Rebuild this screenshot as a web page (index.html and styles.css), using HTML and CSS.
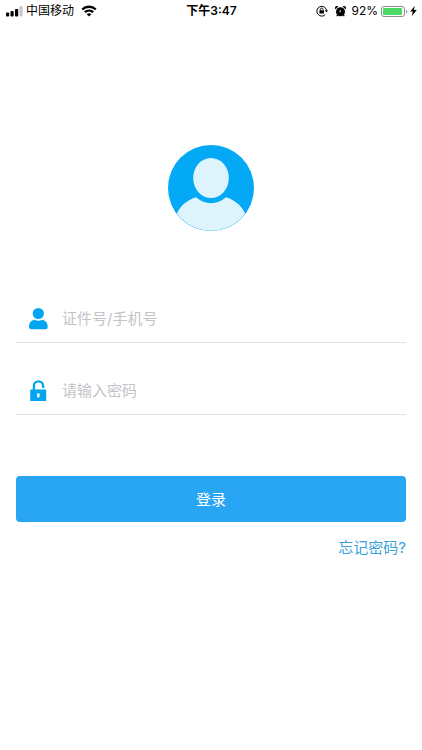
FILE: index.html
```html
<!DOCTYPE html>
<html lang="zh-CN">

<head>
    <meta charset="utf-8">
    <title>登录</title>
    <meta name="viewport" content="width=device-width, initial-scale=1.0">
    <link rel="stylesheet" href="styles.css">
</head>

<body>
    <header class="status-bar">
        <div class="status-left">
            <svg class="signal" width="17" height="11" viewBox="0 0 17 11" aria-hidden="true">
                <rect x="0" y="6.500" width="3.200" height="4" rx="1" />
                <rect x="4.500" y="5" width="3.200" height="5.500" rx="1" />
                <rect x="9" y="3" width="3.200" height="7.500" rx="1" />
                <rect x="13.500" y="0" width="3" height="10.500" rx="1" fill="#c4c4c4" />
            </svg>
            <span class="carrier">中国移动</span>
            <svg class="wifi" width="16" height="12" viewBox="0 0 16 12" fill="none" stroke="#000" stroke-width="2.3" aria-hidden="true">
                <path d="M1.200 4.500C5 .8 11 .8 14.800 4.500" />
                <path d="M3.800 7.200c2.400-2.200 6-2.200 8.400 0" />
                <path d="M8 11.500 5.700 9.200c1.300-1.200 3.300-1.200 4.600 0z" fill="#000" stroke="none" />
            </svg>
        </div>
        <time class="clock">下午3:47</time>
        <div class="status-right">
            <svg class="rotation" width="12" height="12" viewBox="0 0 12 12" fill="none" stroke="#000" aria-hidden="true">
                <path d="M9.200 9.700A4.900 4.900 0 1 1 10.500 5" />
                <path d="M8.800 5.200h3.200L10.500 7.400z" fill="#000" stroke="none" />
                <rect x="3.400" y="5.200" width="4.600" height="3.400" rx=".5" fill="#000" stroke="none" />
                <path d="M4.400 5.400V4.300a1.300 1.300 0 0 1 2.600 0v1.100" stroke-width=".9" />
            </svg>
            <svg class="alarm" width="11" height="11" viewBox="0 0 11 11" aria-hidden="true">
                <circle cx="5.500" cy="5.800" r="4.500" />
                <path d="M.5 3.200A1.900 1.900 0 0 1 3.300.6zM10.500 3.200A1.900 1.900 0 0 0 7.700.6z" />
                <path d="m2.600 8.700-.8 1.500M8.400 8.700l.8 1.500" stroke="#000" stroke-width="1.200" />
                <path d="M5.500 3.800v2.200L4 5.100" fill="none" stroke="#fff" stroke-width=".6" />
            </svg>
            <span class="percent">92%</span>
            <svg class="battery" width="27" height="11" viewBox="0 0 27 11" aria-hidden="true">
                <rect x=".5" y=".5" width="23" height="10" rx="2.500" fill="#fff" stroke="#8d8d8d" />
                <rect x="2" y="2" width="19" height="7" rx="1" fill="#4cd964" />
                <path d="M25 3.700c1.700.4 1.700 3.200 0 3.600z" fill="#8d8d8d" />
            </svg>
            <svg class="bolt" width="7" height="10" viewBox="0 0 7 10" aria-hidden="true">
                <path d="M4.700 0 .2 5.600h2.600L1.900 10l4.900-5.900H4z" />
            </svg>
        </div>
    </header>

    <main class="login">
        <svg class="avatar" width="86" height="86" viewBox="0 0 86 86" role="img" aria-label="头像">
            <defs>
                <clipPath id="avatar-clip">
                    <circle cx="43" cy="43" r="42.700" />
                </clipPath>
            </defs>
            <circle cx="43" cy="43" r="43" fill="#03a9f4" />
            <g clip-path="url(#avatar-clip)" fill="#def4fd">
                <ellipse cx="43" cy="33" rx="17.800" ry="20" />
                <path d="M28 52.300Q35 58.200 43 58.200T58 52.300C68 55.500 75 62 77.500 70V86H8.500V70C11 62 18 55.500 28 52.300z" />
            </g>
        </svg>

        <form class="login-form">
            <div class="field">
                <label for="account" aria-label="证件号/手机号">
                    <svg width="20" height="24" viewBox="0 0 20 24" fill="#03a5f0" aria-hidden="true">
                        <circle cx="10.300" cy="6.500" r="5.600" />
                        <path d="M6.300 12.800Q10.300 14.800 14.300 12.800C18 13.600 19.700 16.500 19.700 19.800Q19.700 22.300 17.200 22.300H3.500Q1 22.300 1 19.800C1 16.500 2.600 13.600 6.300 12.800z" />
                    </svg>
                </label>
                <input type="text" id="account" placeholder="证件号/手机号">
            </div>
            <div class="field">
                <label for="password" aria-label="请输入密码">
                    <svg width="20" height="24" viewBox="0 0 20 24" aria-hidden="true">
                        <path d="M5.900 12V6.900a4.600 4.600 0 0 1 9.200 0V9" fill="none" stroke="#03a5f0" stroke-width="2.300" />
                        <rect x="2.200" y="10.400" width="16" height="11.700" rx=".5" fill="#03a5f0" />
                        <rect x="9" y="14.200" width="2.600" height="4.200" rx="1" fill="#fff" />
                    </svg>
                </label>
                <input type="password" id="password" placeholder="请输入密码">
            </div>
            <button type="submit" class="submit">登录</button>
            <a class="forgot" href="#">忘记密码?</a>
        </form>
    </main>
</body>

</html>
```

FILE: styles.css
```css
:root {
    --primary-color: #29a6f3;
    --link-color: #3a9fdc;
    --line-color: #e4e4e4;
    --placeholder-color: #c3c3c7;
}

* {
    margin: 0;
    padding: 0;
    box-sizing: border-box;
}

body {
    font-family: Inter, "Noto Sans CJK SC", sans-serif;
    font-size: 15px;
    color: #000;
    background-color: #fff;
}

.status-bar {
    display: grid;
    grid-template-columns: 1fr auto 1fr;
    align-items: center;
    height: 22px;
    padding: 0 5px 0 6px;
    font-size: 12px;
    line-height: 20px;
}

.status-left,
.status-right {
    display: flex;
    align-items: center;
}

.status-right {
    justify-content: flex-end;
}

.carrier {
    margin: 0 7px 0 3px;
}

.clock {
    font-weight: 600;
}

.alarm {
    margin: 0 5px 0 7px;
}

.battery {
    margin: 0 2px 0 3px;
}

.login {
    padding: 123px 16px 0;
}

.avatar {
    display: block;
    margin: 0 auto 64px;
}

.login-form {
    display: flex;
    flex-direction: column;
}

.field {
    display: flex;
    align-items: center;
    height: 48px;
    margin-bottom: 24px;
    padding-left: 12px;
    border-bottom: 1px solid var(--line-color);
}

.field label {
    display: flex;
    margin-right: 14px;
}

.field input {
    flex: 1;
    min-width: 0;
    height: 100%;
    border: none;
    outline: none;
    background: transparent;
    font: inherit;
}

.field input::placeholder {
    color: var(--placeholder-color);
}

.submit {
    height: 46px;
    margin-top: 37px;
    padding-bottom: 2px;
    border: none;
    border-radius: 4px;
    background-color: var(--primary-color);
    color: #fff;
    font: inherit;
    cursor: pointer;
}

.forgot {
    align-self: flex-end;
    margin-top: 14px;
    color: var(--link-color);
    line-height: 24px;
    text-decoration: none;
}
```
